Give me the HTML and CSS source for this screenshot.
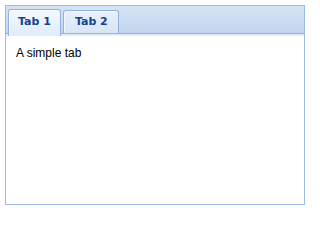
FILE: index.html
```html
<!DOCTYPE html>
<html>
<head>
<meta charset="utf-8">
<link rel="stylesheet" href="styles.css">
</head>
<body>
<div class="panel">
  <div class="header">
    <div class="tab active">Tab 1</div>
    <div class="tab">Tab 2</div>
  </div>
  <div class="spacer"></div>
  <div class="body">A simple tab</div>
</div>
</body>
</html>
```
FILE: styles.css
```css
html, body { margin: 0; padding: 0; background: #fff; }
.panel {
  box-sizing: border-box;
  width: 300px;
  height: 200px;
  margin: 5px;
  border: 1px solid #99bbe8;
  display: flex;
  flex-direction: column;
}
.header {
  height: 24px;
  padding: 3px 0 0 2px;
  display: flex;
  align-items: flex-end;
  gap: 2px;
  background: linear-gradient(#d5e3f4, #c3d5ee);
  border-bottom: 1px solid #8db2e3;
}
.tab {
  box-sizing: border-box;
  height: 23px;
  margin-top: 1px;
  padding: 0 10px 0 11px;
  border: 1px solid #8db2e3;
  border-bottom: none;
  border-radius: 3px 3px 0 0;
  background: linear-gradient(#e8f0fb, #d7e5f7);
  font: bold 11px/22px "DejaVu Sans", sans-serif;
  color: #15428b;
  box-shadow: inset 1px 1px 0 rgba(255,255,255,0.6);
}
.tab.active {
  height: 27px;
  margin-bottom: -3px;
  padding: 0 9px 2px 9px;
  line-height: 24px;
  background: linear-gradient(#f3f8fe, #deecfd);
  position: relative;
  z-index: 1;
}
.spacer { height: 2px; background: #deecfd; }
.body {
  flex: 1;
  padding: 10px 10px;
  font: 12px/14px "Liberation Sans", sans-serif;
  color: #000;
}
```
